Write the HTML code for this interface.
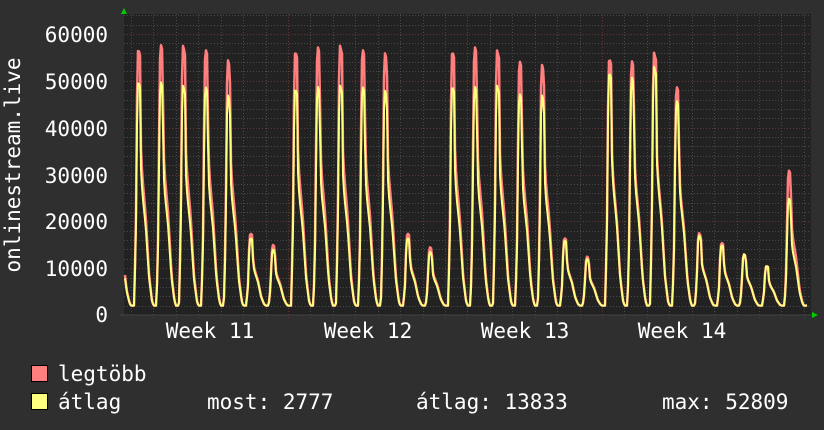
<!DOCTYPE html>
<html><head><meta charset="utf-8"><style>
html,body{margin:0;padding:0;background:#2f2f2f;width:824px;height:430px;overflow:hidden}
svg{display:block}
text{font-family:"DejaVu Sans Mono","Liberation Mono",monospace;font-size:21px;fill:#fff}
</style></head><body>
<svg id="s" width="824" height="430" xmlns="http://www.w3.org/2000/svg">
<rect x="0" y="0" width="824" height="430" fill="#2f2f2f"/>
<rect x="124" y="14" width="687" height="301" fill="#222"/>
<g id="grid"></g>
<g id="data"></g>
<line x1="120" y1="315" x2="814" y2="315" fill="none" stroke="#444" stroke-width="1"/>
<polygon points="121,14 127,14 124,8" fill="#0c0"/>
<polygon points="812,312 812,318 818,315" fill="#0c0"/>
<g text-anchor="end">
<text x="108" y="42">60000</text>
<text x="108" y="89">50000</text>
<text x="108" y="136">40000</text>
<text x="108" y="183">30000</text>
<text x="108" y="229">20000</text>
<text x="108" y="276">10000</text>
<text x="108" y="322">0</text>
</g>
<g text-anchor="middle">
<text x="210" y="338">Week 11</text>
<text x="368" y="338">Week 12</text>
<text x="525" y="338">Week 13</text>
<text x="682" y="338">Week 14</text>
</g>
<text transform="translate(20,165) rotate(-90)" text-anchor="middle">onlinestream.live</text>
<rect x="31.5" y="365.5" width="16" height="16" fill="#ff7f7f" stroke="#000"/>
<rect x="31.5" y="393.5" width="16" height="16" fill="#ffff7f" stroke="#000"/>
<text x="58" y="381">legtöbb</text>
<text x="58" y="409">átlag</text>
<text x="207" y="409">most: 2777</text>
<text x="416" y="409">átlag: 13833</text>
<text x="662" y="409">max: 52809</text>
</svg>
<script>
var NS="http://www.w3.org/2000/svg";
var g=document.getElementById('grid'),d=document.getElementById('data');
function ln(x1,y1,x2,y2,c,dash){var l=document.createElementNS(NS,'line');l.setAttribute('x1',x1);l.setAttribute('y1',y1);l.setAttribute('x2',x2);l.setAttribute('y2',y2);l.setAttribute('stroke',c);l.setAttribute('stroke-width',1);if(dash)l.setAttribute('stroke-dasharray',dash);g.appendChild(l);}
function Y(v){return 315-v*0.004683;}
for(var v=2000;v<=64000;v+=2000){var y=Math.round(Y(v))+0.5;if(y<14)break;var maj=v%10000==0;ln(124,y,811,y,maj?'#6b3535':'#4a4a4a','1,2');}
for(var k=-1;k<32;k++){var x=Math.round(131+22.43*k)+0.5;if(x<124||x>811)continue;var maj=((k%7)+7)%7==0;ln(x,14,x,318,maj?'#6b3535':'#4a4a4a','1,2');}
var P=[[57,50],[58,50],[57.5,49],[57,49],[54.5,47],[17.5,16.5],[15,14],[56.5,48.5],[57.5,49],[57.5,49],[57,49],[56,48],[17.5,16.5],[14.5,13.5],[56.5,49],[57.5,49],[56.5,49],[54.5,47.5],[53.5,47],[16.5,16],[12.5,12],[55,52],[54.5,51],[56,53],[49,46],[17.5,17],[15.5,15],[13,13],[10.5,10.5],[31,25],[10,10]];
var K=[[-0.65,0],[-0.22,0],[-0.14,0.3],[-0.08,0.9],[-0.04,1],[0.05,0.97],[0.09,0.6],[0.15,0.5],[0.3,0.35],[0.45,0.12],[0.58,0.02],[0.65,0]];
function prof(t){if(t<=K[0][0]||t>=K[K.length-1][0])return 0;for(var i=1;i<K.length;i++){if(t<=K[i][0]){var a=K[i-1],b=K[i];return a[1]+(b[1]-a[1])*(t-a[0])/(b[0]-a[0]);}}return 0;}
function val(x,idx){var base=2000;var m=base;for(var k=-1;k<P.length;k++){var px=139+22.43*k;var t=(x-px)/22.43;var pk=k<0?30000:P[k][idx]*1000;if(k<0&&idx==1)pk=27000;var v=base+(pk-base)*prof(t);if(v>m)m=v;}return m;}
function path(idx){var s='';for(var x=125;x<=807;x++){var v=val(x,idx);s+=(x==125?'M':'L')+x+','+Y(v).toFixed(1);}return s;}
function add(p,c,w){var e=document.createElementNS(NS,'path');e.setAttribute('d',p);e.setAttribute('fill','none');e.setAttribute('stroke',c);e.setAttribute('stroke-width',w);e.setAttribute('stroke-linejoin','round');d.appendChild(e);}
add(path(0),'#ff7f7f',2.5);
add(path(1),'#ffff7f',2);
</script>
</body></html>
